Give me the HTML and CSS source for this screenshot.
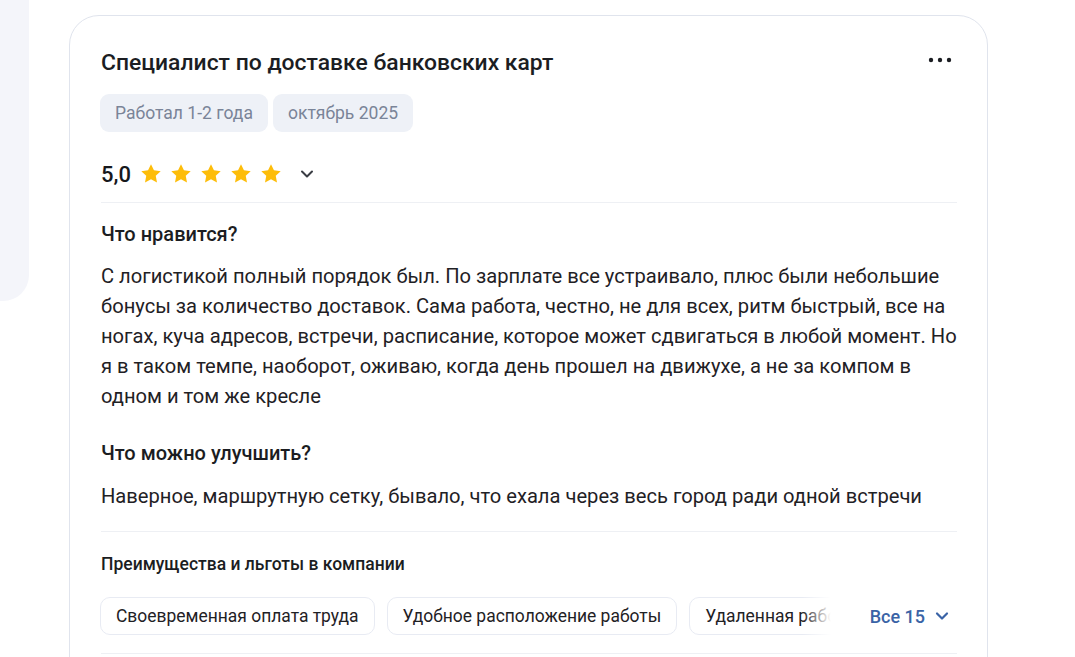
FILE: index.html
```html
<!DOCTYPE html>
<html lang="ru">
<head>
<meta charset="utf-8">
<title>Отзыв</title>
<link rel="stylesheet" href="styles.css">
</head>
<body>
<div class="page">
  <aside class="side"></aside>
  <article class="card">
    <header class="head">
      <h1 class="title">Специалист по доставке банковских карт</h1>
      <button class="more" aria-label="Ещё">
        <svg width="24" height="24" viewBox="0 0 24 24"><circle cx="3" cy="12" r="2.2" fill="#1b1d22"/><circle cx="12" cy="12" r="2.2" fill="#1b1d22"/><circle cx="21" cy="12" r="2.2" fill="#1b1d22"/></svg>
      </button>
    </header>
    <div class="tags">
      <span class="tag">Работал 1-2 года</span>
      <span class="tag">октябрь 2025</span>
    </div>
    <div class="rating">
      <span class="score">5,0</span>
      <span class="stars">
        <svg class="star" viewBox="0 0 24 24"><path d="M12 2.2l2.95 6.15 6.75.85-4.95 4.65 1.25 6.7L12 17.3l-6 3.25 1.25-6.7L2.3 9.2l6.75-.85z"/></svg>
        <svg class="star" viewBox="0 0 24 24"><path d="M12 2.2l2.95 6.15 6.75.85-4.95 4.65 1.25 6.7L12 17.3l-6 3.25 1.25-6.7L2.3 9.2l6.75-.85z"/></svg>
        <svg class="star" viewBox="0 0 24 24"><path d="M12 2.2l2.95 6.15 6.75.85-4.95 4.65 1.25 6.7L12 17.3l-6 3.25 1.25-6.7L2.3 9.2l6.75-.85z"/></svg>
        <svg class="star" viewBox="0 0 24 24"><path d="M12 2.2l2.95 6.15 6.75.85-4.95 4.65 1.25 6.7L12 17.3l-6 3.25 1.25-6.7L2.3 9.2l6.75-.85z"/></svg>
        <svg class="star" viewBox="0 0 24 24"><path d="M12 2.2l2.95 6.15 6.75.85-4.95 4.65 1.25 6.7L12 17.3l-6 3.25 1.25-6.7L2.3 9.2l6.75-.85z"/></svg>
      </span>
      <svg class="chev" width="16" height="16" viewBox="0 0 16 16"><path d="M3 5.5l5 5 5-5" fill="none" stroke="#3a3d44" stroke-width="2" stroke-linecap="round" stroke-linejoin="round"/></svg>
    </div>
    <hr class="sep">
    <section class="block">
      <h2 class="q">Что нравится?</h2>
      <p class="a">С логистикой полный порядок был. По зарплате все устраивало, плюс были небольшие бонусы за количество доставок. Сама работа, честно, не для всех, ритм быстрый, все на ногах, куча адресов, встречи, расписание, которое может сдвигаться в любой момент. Но я в таком темпе, наоборот, оживаю, когда день прошел на движухе, а не за компом в одном и том же кресле</p>
    </section>
    <section class="block block-2">
      <h2 class="q">Что можно улучшить?</h2>
      <p class="a">Наверное, маршрутную сетку, бывало, что ехала через весь город ради одной встречи</p>
    </section>
    <hr class="sep sep-2">
    <h3 class="perks-title">Преимущества и льготы в компании</h3>
    <div class="perks">
      <div class="chips">
        <span class="chip">Своевременная оплата труда</span>
        <span class="chip">Удобное расположение работы</span>
        <span class="chip">Удаленная работа</span>
        <span class="fade"></span>
      </div>
      <button class="all">Все 15
        <svg width="16" height="16" viewBox="0 0 16 16"><path d="M3 5.5l5 5 5-5" fill="none" stroke="#3a63a6" stroke-width="2.2" stroke-linecap="round" stroke-linejoin="round"/></svg>
      </button>
    </div>
    <hr class="sep sep-3">
    <div class="rest"></div>
  </article>
</div>
</body>
</html>
```

FILE: styles.css
```css
html, body {
  margin: 0;
  padding: 0;
  background: #ffffff;
  overflow: hidden;
  height: 657px;
}

body {
  font-family: Roboto, "Noto Sans", "Liberation Sans", sans-serif;
  color: #1d1f23;
}

.page {
  display: flex;
  align-items: flex-start;
  gap: 40px;
}

.side {
  width: 29px;
  height: 301px;
  flex: none;
  background: #f4f5fa;
  border-bottom-right-radius: 26px;
}

.card {
  flex: none;
  width: 857px;
  margin-top: 15px;
  padding: 32px 30px 40px 30px;
  border: 1px solid #e0e4ed;
  border-radius: 30px;
  background: #fff;
}

.head {
  display: flex;
  align-items: center;
  justify-content: space-between;
  padding-left: 1px;
}

.title {
  margin: 0;
  font-size: 22.9px;
  line-height: 30px;
  font-weight: 500;
  color: #1b1d22;
}

.more {
  border: 0;
  background: none;
  padding: 0;
  margin-right: 5px;
  width: 24px;
  height: 24px;
  display: flex;
  margin-top: -6px;
}

.tags {
  display: flex;
  gap: 5px;
  margin-top: 16px;
}

.tag {
  height: 38px;
  display: flex;
  align-items: center;
  padding: 0 15px;
  background: #eef1f7;
  border-radius: 9px;
  font-size: 17.55px;
  color: #7a8498;
}

.rating {
  display: flex;
  align-items: center;
  height: 30px;
  margin-top: 27px;
  padding-left: 1px;
}

.score {
  font-size: 22px;
  font-weight: 500;
  color: #16181c;
  margin-right: 8px;
}

.stars {
  display: flex;
  gap: 6px;
}

.star {
  width: 24px;
  height: 24px;
  fill: #fdbd0a;
}

.chev {
  margin-left: 16px;
}

.sep {
  border: 0;
  height: 1px;
  background: #eef0f4;
  margin: 13px 0 18px 1px;
}

.block {
  padding-left: 1px;
}

.block .q {
  margin: 0;
  font-size: 20px;
  line-height: 26px;
  font-weight: 500;
  color: #1b1d22;
}

.block .a {
  margin: 14px 0 0;
  font-size: 20.15px;
  line-height: 30px;
  font-weight: 400;
  color: #1f2125;
}

.block-2 {
  margin-top: 29px;
}

.block-2 .a {
  margin-top: 15px;
}

.sep-2 {
  margin: 20px 0 20px 1px;
}

.perks-title {
  margin: 0;
  padding-left: 1px;
  font-size: 17.5px;
  line-height: 24px;
  font-weight: 500;
  color: #1b1d22;
}

.perks {
  display: flex;
  align-items: center;
  margin-top: 21px;
}

.chips {
  position: relative;
  display: flex;
  gap: 12px;
  width: 738px;
  overflow: hidden;
  flex: none;
}

.chip {
  flex: none;
  height: 36px;
  display: flex;
  align-items: center;
  padding: 0 15px;
  border: 1px solid #e8ebf3;
  border-radius: 10px;
  font-size: 17.45px;
  color: #1f2125;
  white-space: nowrap;
}

.fade {
  position: absolute;
  right: 0;
  top: 0;
  bottom: 0;
  width: 36px;
  background: linear-gradient(to right, rgba(255,255,255,0), #fff 80%);
}

.all {
  margin-left: auto;
  border: 0;
  background: none;
  padding: 0 7px 0 0;
  display: flex;
  align-items: center;
  gap: 9px;
  font-family: inherit;
  font-size: 18px;
  font-weight: 500;
  color: #3a63a6;
}

.sep-3 {
  margin: 18px 0 0 1px;
}

.rest {
  height: 80px;
}
```
